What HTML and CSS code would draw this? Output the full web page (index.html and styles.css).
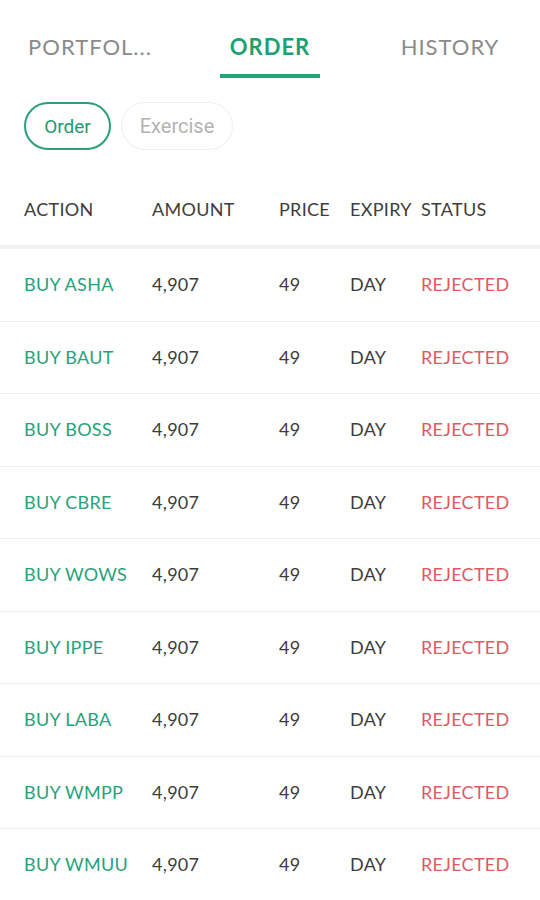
FILE: index.html
```html
<!DOCTYPE html>
<html>
<head>
<meta charset="utf-8">
<link rel="stylesheet" href="styles.css">
</head>
<body>
<div class="app">
  <div class="tabs">
    <div class="tab"><span class="tab-label">PORTFOL...</span></div>
    <div class="tab active"><span class="tab-label">ORDER</span><span class="indicator"></span></div>
    <div class="tab"><span class="tab-label">HISTORY</span></div>
  </div>
  <div class="chips">
    <div class="chip chip-on">Order</div>
    <div class="chip chip-off">Exercise</div>
  </div>
  <div class="thead">
    <div>ACTION</div><div>AMOUNT</div><div>PRICE</div><div>EXPIRY</div><div>STATUS</div>
  </div>
  <div class="sep"></div>
  <div class="rows">
    <div class="row"><div class="buy">BUY ASHA</div><div>4,907</div><div>49</div><div>DAY</div><div class="rej">REJECTED</div></div>
    <div class="row"><div class="buy">BUY BAUT</div><div>4,907</div><div>49</div><div>DAY</div><div class="rej">REJECTED</div></div>
    <div class="row"><div class="buy">BUY BOSS</div><div>4,907</div><div>49</div><div>DAY</div><div class="rej">REJECTED</div></div>
    <div class="row"><div class="buy">BUY CBRE</div><div>4,907</div><div>49</div><div>DAY</div><div class="rej">REJECTED</div></div>
    <div class="row"><div class="buy">BUY WOWS</div><div>4,907</div><div>49</div><div>DAY</div><div class="rej">REJECTED</div></div>
    <div class="row"><div class="buy">BUY IPPE</div><div>4,907</div><div>49</div><div>DAY</div><div class="rej">REJECTED</div></div>
    <div class="row"><div class="buy">BUY LABA</div><div>4,907</div><div>49</div><div>DAY</div><div class="rej">REJECTED</div></div>
    <div class="row"><div class="buy">BUY WMPP</div><div>4,907</div><div>49</div><div>DAY</div><div class="rej">REJECTED</div></div>
    <div class="row"><div class="buy">BUY WMUU</div><div>4,907</div><div>49</div><div>DAY</div><div class="rej">REJECTED</div></div>
  </div>
</div>
</body>
</html>
```

FILE: styles.css
```css
* { box-sizing: border-box; }
html, body { margin: 0; padding: 0; background: #fff; }
body { font-family: Lato, "Open Sans", sans-serif; overflow: hidden; }
.app { width: 540px; height: 900px; overflow: hidden; }

.tabs { display: grid; grid-template-columns: 1fr 1fr 1fr; height: 78px; }
.tab { display: flex; flex-direction: column; align-items: center; }
.tab-label { margin-top: 35px; line-height: 24px; font-size: 22px; color: #8a8a8a; letter-spacing: 1px; }
.tab.active .tab-label { color: #1ba172; font-weight: 700; }
.indicator { display: block; width: 100px; height: 4px; margin-top: 15px; background: #22a676; }

.chips { display: flex; gap: 10px; padding-left: 24px; margin-top: 24px; }
.chip { height: 48px; border-radius: 24px; display: flex; align-items: center; justify-content: center; font-family: Roboto, sans-serif; font-size: 19px; }
.chip-on { width: 87px; border: 2px solid #2a9f7b; color: #1e9a72; }
.chip-off { width: 112px; border: 1.5px solid #eeeeee; color: #b3b3b3; font-size: 20px; }

.thead, .row { display: grid; grid-template-columns: 128px 127px 71px 71px 1fr; padding-left: 24px; align-items: center; font-size: 18px; color: #3d3d3d; letter-spacing: 0.3px; }
.thead { height: 95px; padding-top: 22px; }
.sep { height: 4px; background: #f2f2f2; }
.row { height: 72.5px; padding-bottom: 1px; border-bottom: 1px solid #efefef; }
.buy { color: #27a27a; }
.rej { color: #e05a5e; }
```
